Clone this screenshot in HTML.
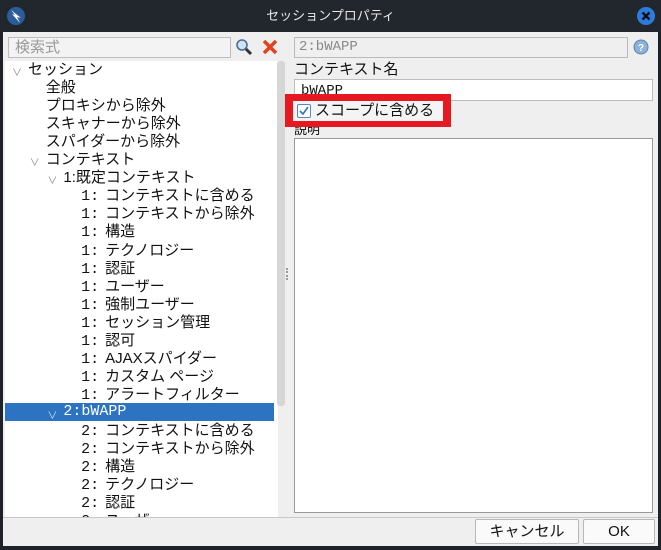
<!DOCTYPE html>
<html><head><meta charset="utf-8"><style>
*{margin:0;padding:0;box-sizing:border-box}
body{width:661px;height:550px;background:#1f2228;position:relative;overflow:hidden;font-family:"Liberation Sans","Noto Sans CJK JP",sans-serif;font-size:15px;color:#111}
.abs{position:absolute}
#title{left:0;top:0;width:661px;height:32px;background:#22262d;color:#e8e8e8;text-align:center;line-height:32px;font-size:13px}
#body{left:3px;top:32px;width:655px;height:514px;background:#efefef}
.field{background:#fff;border:1px solid #bdbdbd}
.row{position:absolute;height:18px;line-height:18px;white-space:nowrap}
.chev{position:absolute;color:#888;font-size:10px}
.mono{font-family:"Liberation Mono","Noto Sans CJK JP",monospace}
.pf{display:inline-block;width:24px;font-family:"Liberation Mono",monospace}
.btn{background:#fafafa;border:1px solid #b8b8b8;border-radius:2px;text-align:center;line-height:24px;font-size:15px}
</style></head><body>
<div id="title" class="abs">セッションプロパティ</div>
<svg class="abs" style="left:6px;top:6px" width="20" height="20"><circle cx="10" cy="10" r="9" fill="#2a5d9a"/><path d="M5 4 L15 12 L11 11 L14 17 L6 8 L9 9 Z" fill="#fff"/></svg>
<svg class="abs" style="left:636px;top:6px" width="20" height="20"><circle cx="10" cy="10" r="9" fill="#2e7be0"/><path d="M6.5 6.5 L13.5 13.5 M13.5 6.5 L6.5 13.5" stroke="#111" stroke-width="2.4"/></svg>
<div id="body" class="abs"></div>
<div class="abs field" style="left:8px;top:37px;width:223px;height:21px;background:#f3f3f3;color:#999;padding-left:6px;line-height:19px">検索式</div>
<svg class="abs" style="left:235px;top:38px" width="18" height="18"><circle cx="7" cy="7" r="5" fill="#cfe3f5" stroke="#4a6e96" stroke-width="1.6"/><path d="M11 11 L16 16" stroke="#333" stroke-width="3"/></svg>
<svg class="abs" style="left:262px;top:39px" width="16" height="16"><path d="M2 2 L14 14 M14 2 L2 14" stroke="#e2421e" stroke-width="3.5"/></svg>
<div class="abs" style="left:5px;top:61px;width:273px;height:456px;background:#fff;overflow:hidden">
<div class="abs" style="left:0;top:342px;width:269px;height:18px;background:#2c73c2"></div>
<div id="tree"></div>
</div>
<div class="abs" style="left:277px;top:61px;width:8px;height:345px;background:#d6d6d6;border-radius:3px"></div>
<div class="abs" style="left:286px;top:268px;width:2px;height:12px;border-left:2px dotted #999"></div>
<div class="abs mono" style="left:294px;top:37px;width:334px;height:21px;background:#efefef;border:1px solid #bbb;color:#888;padding-left:4px;line-height:19px;font-size:14px">2:bWAPP</div>
<svg class="abs" style="left:633px;top:39px" width="16" height="16"><circle cx="8" cy="8" r="7" fill="#8fb2d8" stroke="#5a82b3"/><text x="8" y="12" font-size="10" text-anchor="middle" fill="#fff" font-family="Liberation Sans" font-weight="bold">?</text></svg>
<div class="abs" style="left:294px;top:61px;line-height:18px">コンテキスト名</div>
<div class="abs field mono" style="left:294px;top:79px;width:359px;height:22px;padding-left:6px;line-height:22px;font-size:14px">bWAPP</div>
<div class="abs" style="left:294px;top:122px;line-height:16px;font-size:13px">説明</div>
<div class="abs" style="left:285px;top:94px;width:166px;height:33px;background:#e5191f"></div>
<div class="abs" style="left:293px;top:101px;width:150px;height:20px;background:#f4f4f4"></div>
<div class="abs" style="left:297px;top:104px;width:14px;height:14px;border:1px solid #5a86c0;background:#fff;border-radius:2px"></div>
<svg class="abs" style="left:298px;top:105px" width="12" height="12"><path d="M2 6 L5 9 L10 2" stroke="#2c73c2" stroke-width="1.6" fill="none"/></svg>
<div class="abs" style="left:315px;top:101px;line-height:20px;font-size:15px">スコープに含める</div>
<div class="abs field" style="left:294px;top:138px;width:359px;height:375px;border-color:#999"></div>
<div class="abs" style="left:3px;top:517px;width:655px;height:1px;background:#c8c8c8"></div>
<div class="abs btn" style="left:475px;top:519px;width:104px;height:25px">キャンセル</div>
<div class="abs btn" style="left:583px;top:519px;width:72px;height:25px">OK</div>
<script>
var rows=[[0,"セッション",1],[1,"全般"],[1,"プロキシから除外"],[1,"スキャナーから除外"],[1,"スパイダーから除外"],[1,"コンテキスト",1],[2,"1:既定コンテキスト",1],
[3,"1:|コンテキストに含める"],[3,"1:|コンテキストから除外"],[3,"1:|構造"],[3,"1:|テクノロジー"],[3,"1:|認証"],[3,"1:|ユーザー"],[3,"1:|強制ユーザー"],[3,"1:|セッション管理"],[3,"1:|認可"],[3,"1:|AJAXスパイダー"],[3,"1:|カスタム&nbsp;ページ"],[3,"1:|アラートフィルター"],
[2,"2:bWAPP",1,1],[3,"2:|コンテキストに含める"],[3,"2:|コンテキストから除外"],[3,"2:|構造"],[3,"2:|テクノロジー"],[3,"2:|認証"],[3,"2:|ユーザー"]];
var h="";rows.forEach(function(r,i){var y=i*18.05;var x=23+r[0]*17.7;var c=r[3]?"#fff":"#111";
var t=r[1].indexOf("|")>0?'<span class="pf">'+r[1].split("|")[0]+'</span>'+r[1].split("|")[1]:r[1];
if(r[2])h+='<div class="chev" style="left:'+(x-16)+'px;top:'+(y+3)+'px;color:'+(r[3]?"#cfe0f5":"#888")+'">&#8744;</div>';
h+='<div class="row'+(r[3]?' mono':'')+'" style="left:'+x+'px;top:'+(r[3]?y-1:y)+'px;color:'+c+'">'+t+'</div>';});
document.getElementById("tree").innerHTML=h;
</script>
</body></html>
